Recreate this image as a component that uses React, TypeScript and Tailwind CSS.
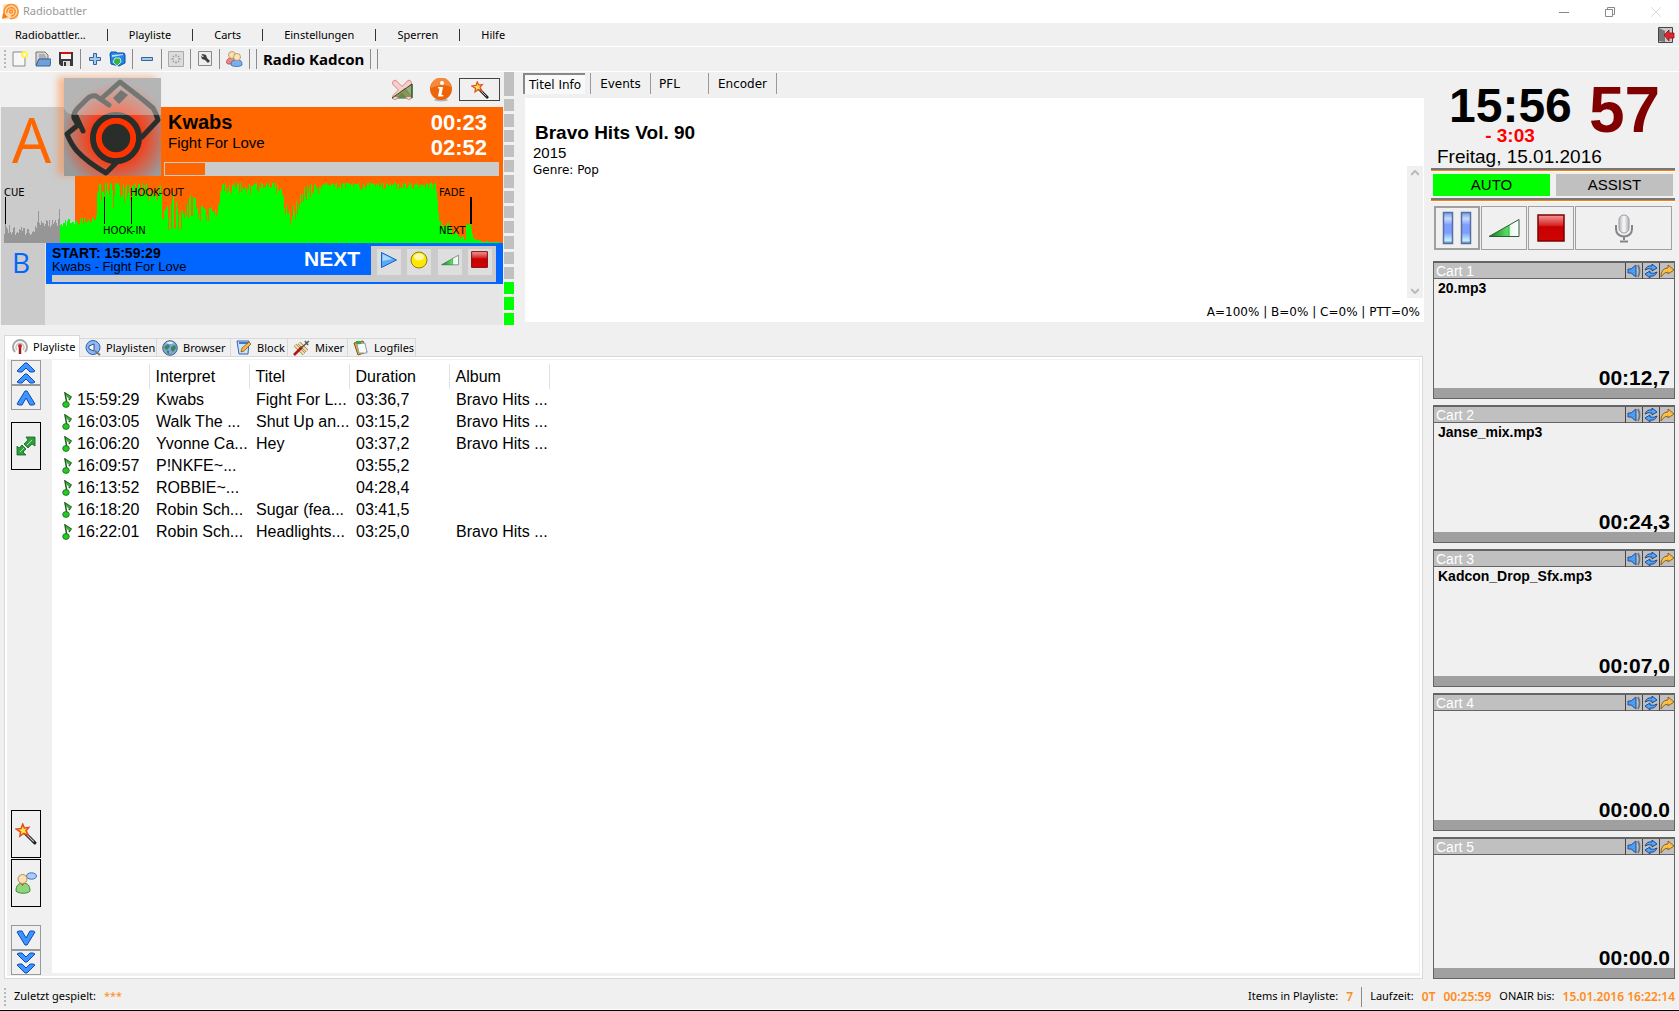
import React from 'react';

type IconProps = { className?: string };

const MENU = ['Radiobattler...', 'Playliste', 'Carts', 'Einstellungen', 'Sperren', 'Hilfe'];

const TRACKS = [
  { time: '15:59:29', artist: 'Kwabs', title: 'Fight For L...', duration: '03:36,7', album: 'Bravo Hits ...' },
  { time: '16:03:05', artist: 'Walk The ...', title: 'Shut Up an...', duration: '03:15,2', album: 'Bravo Hits ...' },
  { time: '16:06:20', artist: 'Yvonne Ca...', title: 'Hey', duration: '03:37,2', album: 'Bravo Hits ...' },
  { time: '16:09:57', artist: 'P!NKFE~...', title: '', duration: '03:55,2', album: '' },
  { time: '16:13:52', artist: 'ROBBIE~...', title: '', duration: '04:28,4', album: '' },
  { time: '16:18:20', artist: 'Robin Sch...', title: 'Sugar (fea...', duration: '03:41,5', album: '' },
  { time: '16:22:01', artist: 'Robin Sch...', title: 'Headlights...', duration: '03:25,0', album: 'Bravo Hits ...' },
];

const CARTS = [
  { name: 'Cart 1', file: '20.mp3', time: '00:12,7' },
  { name: 'Cart 2', file: 'Janse_mix.mp3', time: '00:24,3' },
  { name: 'Cart 3', file: 'Kadcon_Drop_Sfx.mp3', time: '00:07,0' },
  { name: 'Cart 4', file: '', time: '00:00.0' },
  { name: 'Cart 5', file: '', time: '00:00.0' },
];

// x, lowest and highest level of the waveform from that point on
const ENVELOPE: [number, number, number][] = [
  [3, 8, 19], [33, 8, 16], [36, 16, 24], [57, 16, 24], [60, 16, 24], [90, 18, 27], [95, 22, 28],
  [96, 36, 60], [110, 34, 60], [135, 44, 60], [160, 34, 58], [161, 8, 44], [180, 12, 56], [190, 22, 48],
  [207, 20, 36], [216, 24, 36], [220, 46, 60], [235, 50, 60], [278, 48, 60], [284, 24, 42], [290, 16, 32],
  [296, 22, 50], [302, 40, 56], [314, 48, 60], [330, 52, 60], [434, 54, 60], [436, 40, 44], [438, 14, 24],
  [448, 10, 22], [458, 3, 8], [464, 2, 6], [465, 18, 20], [469, 18, 20], [472, 4, 5], [480, 1, 2], [499, 1, 1],
];

const buildWave = (from: number, to: number) => {
  let path = '';
  for (let x = from; x < to; x++) {
    let i = 0;
    while (i < ENVELOPE.length - 2 && ENVELOPE[i + 1][0] <= x) i++;
    const [x0, lo0, hi0] = ENVELOPE[i];
    const [x1, lo1, hi1] = ENVELOPE[i + 1];
    const t = Math.min(1, (x - x0) / (x1 - x0));
    const lo = lo0 + (lo1 - lo0) * t;
    const hi = hi0 + (hi1 - hi0) * t;
    const n = Math.abs(Math.sin(x * 127.1 + 11.7) * 43758.5453) % 1;
    const level = Math.round(hi - (hi - lo) * (lo > 30 ? n * n : n));
    path += `M${x} 67V${67 - level}h1V67z`;
  }
  return path;
};

const WAVE_PLAYED = buildWave(3, 59) + 'M37 67V35h1V67zM58 67V33h1V67z';
const WAVE_REST = buildWave(59, 499);

const AppLogo = () => (
  <svg width="17" height="17" viewBox="0 0 17 17">
    <rect x="1" y="1" width="15" height="15" rx="3" fill="#ffd9ae" />
    <g fill="none" stroke="#f7922e" strokeWidth="1.6">
      <path d="M3 12A7 7 0 1 1 8 15.5" />
      <path d="M5 10a4.2 4.2 0 1 1 4 3" />
      <circle cx="9" cy="8.500" r="1.500" />
    </g>
    <path d="M0 16l1-6 5 4z" fill="#f57c12" />
  </svg>
);

const NewIcon = () => (
  <svg width="16" height="16" viewBox="0 0 16 16">
    <path d="M1 1h12v14H1z" fill="#f7f7f7" stroke="#8a8a8a" />
    <circle cx="12.500" cy="3.500" r="3.500" fill="#fff34a" />
    <circle cx="12.500" cy="3.500" r="1.300" fill="#fff" />
  </svg>
);

const OpenIcon = () => (
  <svg width="16" height="16" viewBox="0 0 16 16">
    <path d="M1 14V1h9l3 3v4H4z" fill="#d6d6d6" stroke="#777" />
    <path d="M4 4h6M4 6h7" stroke="#888" />
    <path d="M4 8h12l-1 7H1z" fill="#6f9fd6" stroke="#3465a4" />
  </svg>
);

const SaveIcon = () => (
  <svg width="16" height="16" viewBox="0 0 16 16">
    <path d="M1 1h14v14H3l-2-2z" fill="#3a3a3a" />
    <path d="M3 1h10v7H3z" fill="#f4f4f4" />
    <path d="M3 1h10v2H3z" fill="#e00b0b" />
    <path d="M5 10h7v5H5z" fill="#ddd" />
    <path d="M6 11h2v4H6z" fill="#333" />
  </svg>
);

const PlusIcon = () => (
  <svg width="16" height="16" viewBox="0 0 16 16">
    <path d="M6.500 2.500h3v4h4v3h-4v4h-3v-4h-4v-3h4z" fill="#a8c8ea" stroke="#2f66a8" />
  </svg>
);

const MinusIcon = () => (
  <svg width="16" height="16" viewBox="0 0 16 16">
    <path d="M2.500 6.500h11v3h-11z" fill="#a8c8ea" stroke="#2f66a8" />
  </svg>
);

const ImportIcon = () => (
  <svg width="17" height="16" viewBox="0 0 17 16">
    <path d="M1 3l1-2h5l1 1h7l1 2v8l-6 3-8-2z" fill="#2584e8" stroke="#0d4ea6" />
    <path d="M3 4l11-1v1L3 6z" fill="#bfe0ff" />
    <path d="M6 7h5l1 4-4 4-4-4z" fill="#35b544" stroke="#dfffe0" strokeWidth="0.8" />
  </svg>
);

const GreyGearIcon = () => (
  <svg width="16" height="16" viewBox="0 0 16 16">
    <path d="M.5.5h15v15H.5z" fill="#dcdcdc" stroke="#aaa" />
    <path d="M8 3.500v2M8 10.500v2M3.500 8h2M10.500 8h2M5 5l1 1M10 10l1 1M11 5l-1 1M6 10l-1 1" stroke="#999" strokeWidth="1.4" />
  </svg>
);

const WrenchIcon = () => (
  <svg width="16" height="16" viewBox="0 0 16 16">
    <path d="M1.500.5h13v14h-13z" fill="#eee" stroke="#888" />
    <path d="M4 4l2-1 3 1 1 3 3 3-2 2-3-3-3-1-1-3 2 1 1-1z" fill="#3c3c3c" />
  </svg>
);

const UsersIcon = () => (
  <svg width="17" height="16" viewBox="0 0 17 16">
    <path d="M.5 12c0-4 2-5 5-5s5 1 5 4v2H2z" fill="#e88a80" stroke="#b74a42" strokeWidth="0.8" />
    <circle cx="6" cy="4" r="3.500" fill="#f6e0bb" stroke="#b98b4a" strokeWidth="0.8" />
    <path d="M5 14c0-4 2-5 6-5s5 1 5 5c-2 2-9 2-11 0z" fill="#79aef0" stroke="#2e66b5" strokeWidth="0.8" />
    <circle cx="11" cy="6" r="3.500" fill="#fae4bb" stroke="#b98b4a" strokeWidth="0.8" />
  </svg>
);

const ExitIcon = () => (
  <svg width="17" height="16" viewBox="0 0 17 16">
    <path d="M.5.500h14v15H.500z" fill="#c9c9c9" stroke="#444" />
    <path d="M1 1l6 3v11l-6-1z" fill="#777" />
    <path d="M6 8l5-5v3h5v5h-5v3z" fill="#e0262d" stroke="#8d1015" strokeWidth="0.8" />
  </svg>
);

const WandIcon = ({ className = 'w-[18px] h-[18px]' }: IconProps) => (
  <svg className={className} viewBox="0 0 20 20">
    <path d="M9 9l9 9" stroke="#222" strokeWidth="3" strokeLinecap="round" />
    <path d="M11 11l6 6" stroke="#ccc" strokeWidth="1" />
    <path d="M7 1l1.500 3.500 4-.5-2.500 3 2 4-4-1.500L4.500 12l.5-4L1 5.500 5.500 5z" fill="#ffe34e" stroke="#e0511d" strokeWidth="1.4" />
  </svg>
);

const Ramp = ({ className = 'w-4 h-3' }: IconProps) => (
  <svg className={className} viewBox="0 0 32 19">
    <defs>
      <linearGradient id="ramp" x1="0" x2="1">
        <stop offset="0" stopColor="#0c7a1d" />
        <stop offset="0.600" stopColor="#58dd62" />
        <stop offset="0.680" stopColor="#37c34a" />
        <stop offset="0.690" stopColor="#e6f7ea" />
        <stop offset="1" stopColor="#fff" />
      </linearGradient>
    </defs>
    <path d="M1 18L31 1v17z" fill="url(#ramp)" stroke="#2c5c3c" strokeWidth="1" />
  </svg>
);

const StopIcon = ({ className = 'w-4 h-4' }: IconProps) => (
  <svg className={className} viewBox="0 0 28 28">
    <defs>
      <linearGradient id="stop" x1="0" y1="0" x2="0" y2="1">
        <stop offset="0" stopColor="#f49a9a" />
        <stop offset="0.400" stopColor="#d62424" />
        <stop offset="0.450" stopColor="#c90000" />
        <stop offset="1" stopColor="#cf0505" />
      </linearGradient>
    </defs>
    <path d="M1 1h26v26H1z" fill="url(#stop)" stroke="#7d0000" strokeWidth="1.5" />
  </svg>
);

const FadeOffIcon = () => (
  <svg width="22" height="22" viewBox="0 0 22 22">
    <path d="M1 19L21 5v14z" fill="#8fae7a" stroke="#385f2c" />
    <path d="M4 4l14 14M18 4L4 18" stroke="#d98080" strokeWidth="6" strokeLinecap="round" opacity="0.800" />
    <path d="M4 4l14 14M18 4L4 18" stroke="#f8cdca" strokeWidth="4" strokeLinecap="round" />
    <path d="M4 17l10-8 7 9H3z" fill="#4d7a22" opacity="0.650" />
    <path d="M1 19L21 5v14" fill="none" stroke="#2c5020" />
  </svg>
);

const InfoIcon = () => (
  <svg width="24" height="24" viewBox="0 0 24 24">
    <ellipse cx="12" cy="22" rx="7" ry="1.500" fill="#b5b5b5" />
    <circle cx="12" cy="11" r="11" fill="#ee6406" />
    <path d="M2 10a10 10 0 0 1 20-1c-6-3-14-2-20 1z" fill="#f58a3c" />
    <circle cx="13" cy="5" r="2" fill="#fff" />
    <path d="M9 9h5l-1.500 8h2l-.5 1.500H9L10.500 10.500H9z" fill="#fff" />
  </svg>
);

const CameraArt = () => (
  <svg width="97" height="98" viewBox="0 0 97 98" className="block">
    <defs>
      <radialGradient id="glow" cx="0.540" cy="0.600" r="0.560">
        <stop offset="0" stopColor="#ff3300" />
        <stop offset="0.450" stopColor="#fb3a12" />
        <stop offset="1" stopColor="#9a9a9a" />
      </radialGradient>
    </defs>
    <path d="M0 0h97v98H0z" fill="url(#glow)" />
    <g fill="none" stroke="#2a2e2a" strokeWidth="5" strokeLinecap="round" strokeLinejoin="round">
      <path d="M37 21L56 4l22 17 11 9q3 5 5 12L78 59" />
      <path d="M45 27L32 18q-5-1-9 3L13 31q-4 5-3 9l4 7L3 56q4 10 10 17 10 11 29 22l13-13" />
      <path d="M12 38l7 15" />
    </g>
    <path d="M57 12l7 5-9 9-6-6z" fill="#2a2e2a" />
    <circle cx="52" cy="60" r="23" fill="none" stroke="#2a2e2a" strokeWidth="6" />
    <circle cx="52" cy="60" r="17" fill="#2a2e2a" stroke="#ff3300" strokeWidth="5.500" />
    <path d="M0 0h97v37H10Q2 36 0 30z" fill="#dcdcdc" opacity="0.420" />
  </svg>
);

const PlayIcon = () => (
  <svg width="18" height="18" viewBox="0 0 18 18">
    <path d="M1.500 1.500l15 7.500-15 7.500z" fill="#55acf6" stroke="#1c5fc2" />
    <path d="M2.500 3l10 5-10 2z" fill="#a8d7ff" />
  </svg>
);

const LampIcon = () => (
  <svg width="18" height="18" viewBox="0 0 18 18">
    <circle cx="9" cy="9" r="8" fill="#ffe800" stroke="#8f7c1c" />
    <ellipse cx="9" cy="6" rx="5" ry="3.500" fill="#fff9a5" />
  </svg>
);

const PauseIcon = () => (
  <svg width="30" height="34" viewBox="0 0 30 34">
    <defs>
      <linearGradient id="pause" x1="0" y1="0" x2="0" y2="1">
        <stop offset="0" stopColor="#7597e8" />
        <stop offset="0.200" stopColor="#c8dcff" />
        <stop offset="0.400" stopColor="#7f9cff" />
        <stop offset="0.650" stopColor="#7f9cff" />
        <stop offset="0.900" stopColor="#c5f1ff" />
        <stop offset="1" stopColor="#5b83c9" />
      </linearGradient>
    </defs>
    <path d="M1.500 1.500h9v31h-9zM19.500 1.500h9v31h-9z" fill="url(#pause)" stroke="#55709c" strokeWidth="1.500" />
  </svg>
);

const MicIcon = () => (
  <svg width="18" height="29" viewBox="0 0 18 29">
    <defs>
      <linearGradient id="mic" x1="0" x2="1">
        <stop offset="0" stopColor="#b9b9b9" />
        <stop offset="0.500" stopColor="#fafafa" />
        <stop offset="1" stopColor="#b0b0b0" />
      </linearGradient>
    </defs>
    <path d="M1 11v4c0 10 16 10 16 0v-4M9 22v4M5 27.500h8" fill="none" stroke="#858585" strokeWidth="2" />
    <rect x="4" y="1" width="10" height="18" rx="5" fill="url(#mic)" stroke="#9a9aa8" />
  </svg>
);

const NoteIcon = () => (
  <svg width="11" height="16" viewBox="0 0 11 16">
    <path d="M5 12L3 1l6 4-2 3" fill="none" stroke="#245c24" strokeWidth="1.500" />
    <path d="M4 2l5 3-2 2-3-3z" fill="#35b535" />
    <ellipse cx="4" cy="12.500" rx="3.300" ry="2.900" fill="#22cc22" stroke="#146614" strokeWidth="0.800" />
  </svg>
);

// one or two stacked chevrons, "down" flips them
const Chevrons = ({ count, down = false }: { count: 1 | 2; down?: boolean }) => (
  <svg width="20" height={count === 2 ? 22 : 16} viewBox={count === 2 ? '0 0 20 22' : '0 0 20 16'} className={down ? 'rotate-180' : ''}>
    {count === 2 ? (
      <path d="M1 9l8-8h2l8 8-2 1h-3l-4-4-4 4H3zM1 20l8-8h2l8 8-2 1h-3l-4-4-4 4H3z" fill="#3f95ff" stroke="#0a4ab8" />
    ) : (
      <path d="M1 14L9 1h2l8 13-2 1h-3l-4-7-4 7H3z" fill="#3f95ff" stroke="#0a4ab8" />
    )}
  </svg>
);

const ExpandIcon = () => (
  <svg width="20" height="20" viewBox="0 0 20 20" fill="#2f9e3c" stroke="#14602a" strokeWidth="0.800">
    <path d="M10 1h9v9l-3-2-4 4-4-4 4-4z" />
    <path d="M10 19H1v-9l2 2 3-3 4 4-3 3z" />
    <path d="M11 9l5-5M4 16l4-4" stroke="#c6f0c8" />
  </svg>
);

const ChatUserIcon = () => (
  <svg width="22" height="22" viewBox="0 0 22 22">
    <ellipse cx="16.500" cy="4" rx="5" ry="3.200" fill="#a9cdfb" stroke="#3c6fb9" />
    <path d="M1 19c0-5 2-8 7-8s7 3 7 8c-2 3-12 3-14 0z" fill="#8ed67c" stroke="#3f8a34" />
    <circle cx="7.500" cy="7" r="4.500" fill="#fae0b4" stroke="#b98b4a" />
    <path d="M6 12h3l-1.500 2z" fill="#e03a1a" />
  </svg>
);

const AntennaIcon = () => (
  <svg width="16" height="16" viewBox="0 0 16 16" fill="none">
    <path d="M3 13a7 7 0 1 1 10 0" stroke="#a5a5a5" strokeWidth="2" />
    <path d="M5 11a4 4 0 1 1 6 0" stroke="#c2c2c2" strokeWidth="1.500" />
    <path d="M8 8v7" stroke="#a01818" strokeWidth="2.500" />
    <circle cx="8" cy="7" r="2" fill="#e02020" />
  </svg>
);

const ListsIcon = () => (
  <svg width="16" height="16" viewBox="0 0 16 16">
    <circle cx="8" cy="7.500" r="7" fill="#8db8f2" stroke="#2e62b8" />
    <path d="M4 6l5-2v7L4 9z" fill="#fff" stroke="#2a5199" />
    <path d="M10 11l5 4" stroke="#777" strokeWidth="2" />
  </svg>
);

const GlobeIcon = () => (
  <svg width="16" height="16" viewBox="0 0 16 16">
    <circle cx="8" cy="8" r="7.300" fill="#78a9d8" stroke="#4a5f77" />
    <path d="M2 7l4-3 2 2-2 3-2 1zM9 7l4-2 1 3-3 4-2-2zM5 10l2 1v3l-2-1z" fill="#41825b" />
    <path d="M4 3q4-3 8 0-4 2-8 0z" fill="#e5f1fb" />
  </svg>
);

const BlockIcon = () => (
  <svg width="16" height="16" viewBox="0 0 16 16">
    <path d="M1 1h12l-1 13H3z" fill="#cfe2fb" stroke="#2e62b8" />
    <path d="M3 2h9v2H3z" fill="#3d77cc" />
    <path d="M5 12l1-4 7-6 2 2-7 7z" fill="#f7b93e" stroke="#8c5a14" strokeWidth="0.800" />
  </svg>
);

const MixerIcon = () => (
  <svg width="17" height="16" viewBox="0 0 17 16" fill="none">
    <path d="M2 5l9 9M6 3l8 8" stroke="#a3894a" strokeWidth="3.500" />
    <path d="M2 5l9 9M6 3l8 8" stroke="#f3e2ae" strokeWidth="1.800" />
    <path d="M1 15l8-8" stroke="#b31414" strokeWidth="2.500" />
    <path d="M8 8l8-7M12 1l3 4" stroke="#555" strokeWidth="1.500" />
  </svg>
);

const LogIcon = () => (
  <svg width="16" height="16" viewBox="0 0 16 16">
    <path d="M1 3l9-2 4 11-9 3z" fill="#dfa93d" stroke="#7b5a1c" />
    <path d="M4 4l8-1 2 10H6z" fill="#f6fbff" stroke="#91a0ab" />
    <path d="M3 1h5v3H3z" fill="#3ca644" />
  </svg>
);

const SpeakerIcon = () => (
  <svg width="14" height="14" viewBox="0 0 14 14">
    <path d="M1 5h3l5-4v12l-5-4H1z" fill="#4f9cf2" stroke="#1d549f" />
    <path d="M11 1q3 6 0 12" fill="none" stroke="#6f7580" strokeWidth="1.800" />
  </svg>
);

const LoopIcon = () => (
  <svg width="14" height="14" viewBox="0 0 14 14">
    <path d="M1 6q2-5 7-4V0l5 4-5 3V5Q4 4 1 6zM13 8q-2 5-7 4v2l-5-4 5-3v2q4 1 7-1z" fill="#4fa5ff" stroke="#153e80" strokeWidth="0.900" />
  </svg>
);

const ForwardIcon = () => (
  <svg width="14" height="14" viewBox="0 0 14 14">
    <path d="M1 13Q1 4 8 4V1l6 5-6 4V8q-4 0-7 5z" fill="#fcbf4a" stroke="#8a5a14" strokeWidth="0.900" />
  </svg>
);

const Separator = () => <span className="w-px h-5 bg-[#8c8c8c]" />;

const Grip = () => <span className="w-0.5 h-[18px] border-l-2 border-dotted border-[#b8b8b8]" />;

const TopBars = () => (
  <header className="font-['Noto_Sans',sans-serif]">
    <div className="h-[23px] bg-white flex items-center pl-0.5 pr-[18px] gap-1 text-[11px] text-[#999]">
      <AppLogo />
      <span className="flex-1">Radiobattler</span>
      <div className="flex items-center gap-9">
        <button aria-label="Minimieren">
          <svg width="10" height="10"><path d="M0 5.500h10" stroke="#888" /></svg>
        </button>
        <button aria-label="Wiederherstellen">
          <svg width="10" height="10" fill="none" stroke="#888"><path d="M.5 2.500h7v7h-7zM2.500 2.500v-2h7v7h-2" /></svg>
        </button>
        <button aria-label="Schließen">
          <svg width="10" height="10"><path d="M0 0l10 10M10 0L0 10" stroke="#ddd" /></svg>
        </button>
      </div>
    </div>
    <nav className="h-6 border-b border-white flex items-center pt-px pl-[15px] pr-1 gap-[21px] text-[11px] text-black">
      {MENU.map((item, i) => (
        <React.Fragment key={item}>
          {i > 0 && <span className="w-px h-3 bg-[#333]" />}
          <button>{item}</button>
        </React.Fragment>
      ))}
      <button aria-label="Beenden" className="ml-auto"><ExitIcon /></button>
    </nav>
    <div className="h-[25px] border-b border-white flex items-center pl-1 gap-1.5">
      <Grip />
      <div className="flex gap-[7px]">
        <button aria-label="Neu"><NewIcon /></button>
        <button aria-label="Öffnen"><OpenIcon /></button>
        <button aria-label="Speichern"><SaveIcon /></button>
      </div>
      <Separator />
      <button aria-label="Hinzufügen"><PlusIcon /></button>
      <button aria-label="Importieren"><ImportIcon /></button>
      <Separator />
      <button aria-label="Entfernen"><MinusIcon /></button>
      <Separator />
      <button aria-label="Optionen"><GreyGearIcon /></button>
      <Separator />
      <button aria-label="Werkzeuge"><WrenchIcon /></button>
      <Separator />
      <button aria-label="Benutzer"><UsersIcon /></button>
      <Separator />
      <Separator />
      <span className="text-[15px] leading-5 font-bold text-black">Radio Kadcon</span>
      <Separator />
      <Separator />
    </div>
  </header>
);

const Mark = ({ className, children }: { className: string; children: React.ReactNode }) => (
  <span className={`absolute font-['DejaVu_Sans',sans-serif] text-[10px] leading-[10px] text-black ${className}`}>{children}</span>
);

const Decks = () => (
  <section className="w-[502px] ml-px shrink-0 flex flex-col font-['Liberation_Sans',sans-serif]">
    <div className="h-[35px] flex items-center justify-end gap-1.5 pr-[3px]">
      <button aria-label="Fade aus" className="mr-2.5"><FadeOffIcon /></button>
      <button aria-label="Info"><InfoIcon /></button>
      <button aria-label="Assistent" className="w-[41px] h-[23px] border border-[#444] flex items-center justify-center"><WandIcon /></button>
    </div>

    <div className="relative bg-[#cbcbcb]">
      <div className="absolute left-[63px] -top-[29px] shadow-[-6px_-1px_7px_0px_rgba(255,130,50,0.5)]"><CameraArt /></div>
      <div className="flex h-[69px]">
        <span className="w-[74px] pl-[11px] font-['Open_Sans',sans-serif] text-[62px] leading-[64px] text-[#ff6600]">A</span>
        <div className="flex-1 bg-[#ff6600] flex flex-col pl-[89px]">
          <div className="flex-1 flex justify-between pl-1 pr-4">
            <div className="text-black pt-[3px]">
              <div className="text-[20px] leading-6 font-bold">Kwabs</div>
              <div className="text-[15px] leading-[18px]">Fight For Love</div>
            </div>
            <div className="text-[22px] leading-[25px] font-bold text-white pt-[3px] text-right">
              <div>00:23</div>
              <div>02:52</div>
            </div>
          </div>
          <div className="h-3.5 mr-1 bg-[#cbcbcb] border border-[#cbcbcb]">
            <div className="w-10 h-full bg-[#ff6600]" />
          </div>
        </div>
      </div>
      <div className="relative h-[67px]">
        <svg className="block w-full h-full" viewBox="0 0 502 67" shapeRendering="crispEdges">
          <path d="M74 0h428v67H74z" fill="#ff6600" />
          <path d={WAVE_PLAYED} fill="#969696" />
          <path d={WAVE_REST} fill="#00ff00" />
          <path d="M4.500 21v27M103.500 21v27M130.500 21v27" stroke="#000" />
          <path d="M470 21v27" stroke="#000" strokeWidth="2" />
        </svg>
        <Mark className="left-[3px] top-3">CUE</Mark>
        <Mark className="left-[129px] top-3">HOOK-OUT</Mark>
        <Mark className="left-[102px] top-[50px]">HOOK-IN</Mark>
        <Mark className="left-[438px] top-3">FADE</Mark>
        <Mark className="left-[438px] top-[50px]">NEXT</Mark>
      </div>
    </div>

    <div className="flex flex-1 bg-[#e6e6e6]">
      <span className="w-11 bg-[#cbcbcb] pl-[11px] font-['Open_Sans',sans-serif] text-[28px] leading-[38px] text-[#0066ff]">B</span>
      <div className="flex-1">
        <div className="h-[41px] ml-px bg-[#0066ff] flex flex-col pl-1.5 pr-[7px]">
          <div className="flex h-8">
            <div className="flex-1 text-black pt-[3px]">
              <div className="text-[14px] leading-[14px] font-bold">START: 15:59:29</div>
              <div className="text-[13px] leading-[14px]">Kwabs - Fight For Love</div>
            </div>
            <span className="text-[21px] leading-[31px] font-bold text-white pr-[11px]">NEXT</span>
            <div className="w-[125px] mt-[3px] bg-[#cbcbcb] flex items-start justify-between pl-1.5 pr-1 pt-[3px]">
              <button aria-label="Start" className="w-6 h-[26px] bg-[#dedede] flex justify-center pt-0.5"><PlayIcon /></button>
              <button aria-label="PFL" className="w-6 h-[26px] bg-[#dedede] flex justify-center pt-0.5"><LampIcon /></button>
              <button aria-label="Fade" className="w-6 h-[26px] bg-[#dedede] flex justify-center pt-1"><Ramp className="w-[18px] h-3.5" /></button>
              <button aria-label="Stop" className="w-6 h-[26px] bg-[#dedede] flex justify-center pt-0.5"><StopIcon className="w-[17px] h-[17px]" /></button>
            </div>
          </div>
          <div className="h-[7px] bg-[#cbcbcb]" />
        </div>
      </div>
    </div>
  </section>
);

const LevelMeter = () => (
  <div className="w-2.5 ml-px shrink-0 flex flex-col gap-[3px]">
    <span className="h-6 bg-[#c0c0c0]" />
    {Array.from({ length: 15 }, (_, i) => (
      <span key={i} className={`flex-1 ${i >= 12 ? 'bg-[#00ff00]' : 'bg-[#c0c0c0]'}`} />
    ))}
  </div>
);

const TitleInfo = () => (
  <section className="flex-1 min-w-0 ml-[9px] mb-[3px] flex flex-col font-['DejaVu_Sans',sans-serif] text-[12px] text-black">
    <div className="h-[26px] flex items-start pt-px">
      <button className="h-[21px] w-[62px] border-t-2 border-l-2 border-[#888] bg-[#f9f9f9] whitespace-nowrap">Titel Info</button>
      <button className="h-[21px] w-[60px] ml-[5px] border-l border-[#999]">Events</button>
      <button className="h-[21px] w-[58px] border-l border-[#999] pr-5">PFL</button>
      <button className="h-[21px] w-[69px] border-x border-[#999]">Encoder</button>
    </div>
    <div className="flex-1 ml-0.5 bg-white flex flex-col pl-2 pr-px">
      <div className="flex-1 flex justify-between">
        <div className="pt-6">
          <h1 className="pl-0.5 font-['Liberation_Sans',sans-serif] text-[19px] leading-[22px] font-bold">Bravo Hits Vol. 90</h1>
          <p className="font-['Liberation_Sans',sans-serif] text-[15px] leading-[18px]">2015</p>
          <p className="leading-4">Genre: Pop</p>
        </div>
        <div className="w-4 mt-[68px] bg-[#f0f0f0] flex flex-col items-center justify-between py-1">
          <svg width="8" height="6" fill="none" stroke="#bbb" strokeWidth="2"><path d="M0 5l4-4 4 4" /></svg>
          <svg width="8" height="6" fill="none" stroke="#bbb" strokeWidth="2"><path d="M0 1l4 4 4-4" /></svg>
        </div>
      </div>
      <div className="h-6 pr-[3px] text-right leading-[28px]">A=100% | B=0% | C=0% | PTT=0%</div>
    </div>
  </section>
);

const TABS = [
  { label: 'Playlisten', icon: <ListsIcon />, width: 'w-[77px]' },
  { label: 'Browser', icon: <GlobeIcon />, width: 'w-[74px]' },
  { label: 'Block', icon: <BlockIcon />, width: 'w-[57px]' },
  { label: 'Mixer', icon: <MixerIcon />, width: 'w-[60px]' },
  { label: 'Logfiles', icon: <LogIcon />, width: 'w-[68px]' },
];

const SideButton = ({ label, className, children }: { label: string; className: string; children: React.ReactNode }) => (
  <button aria-label={label} className={`w-[30px] flex items-center justify-center border ${className}`}>{children}</button>
);

const Playlist = () => (
  <section className="flex-1 flex flex-col pl-1 pr-2 pt-2.5 text-black">
    <div className="flex items-end font-['Noto_Sans',sans-serif] text-[11px] leading-4">
      <button className="relative w-[76px] h-[22px] -mb-px border border-b-0 border-[#d9d9d9] bg-white flex items-center gap-[5px] pl-[7px] whitespace-nowrap">
        <AntennaIcon />Playliste
      </button>
      {TABS.map((tab) => (
        <button key={tab.label} className={`h-[18px] border border-l-0 border-b-0 border-[#d9d9d9] flex items-center gap-[5px] pl-[5px] whitespace-nowrap ${tab.width}`}>
          {tab.icon}{tab.label}
        </button>
      ))}
    </div>
    <div className="flex-1 border border-[#d9d9d9] bg-white p-0.5 flex">
      <div className="flex-1 flex bg-[#f0f0f0] pt-px pb-px pr-px">
        <div className="w-[45px] flex flex-col pl-1">
          <SideButton label="Ganz nach oben" className="h-[25px] border-[#999]"><Chevrons count={2} /></SideButton>
          <SideButton label="Nach oben" className="h-[25px] border-[#999]"><Chevrons count={1} /></SideButton>
          <SideButton label="Erweitern" className="h-12 mt-3 border-black"><ExpandIcon /></SideButton>
          <SideButton label="Assistent" className="h-12 mt-auto border-black"><WandIcon className="w-[22px] h-[22px]" /></SideButton>
          <SideButton label="Moderation" className="h-12 mt-px border-black"><ChatUserIcon /></SideButton>
          <SideButton label="Nach unten" className="h-[25px] mt-[18px] border-[#999]"><Chevrons count={1} down /></SideButton>
          <SideButton label="Ganz nach unten" className="h-[25px] border-[#999]"><Chevrons count={2} down /></SideButton>
        </div>
        <div className="flex-1 bg-white mb-0.5 pt-1">
          <table className="table-fixed w-[497px] font-['Liberation_Sans',sans-serif] text-[16px] leading-[22px]">
            <thead>
              <tr className="h-[25px] text-left">
                <th className="w-[97px] border-r border-[#e2e2e2]" />
                {['Interpret', 'Titel', 'Duration', 'Album'].map((head) => (
                  <th key={head} className="w-[100px] pl-1.5 font-normal border-r border-[#e2e2e2]">{head}</th>
                ))}
              </tr>
            </thead>
            <tbody>
              {TRACKS.map((track) => (
                <tr key={track.time} className="h-[22px] whitespace-nowrap">
                  <td>
                    <div className="flex items-center gap-1 pl-2.5"><NoteIcon /><span>{track.time}</span></div>
                  </td>
                  <td className="pl-[7px]">{track.artist}</td>
                  <td className="pl-[7px]">{track.title}</td>
                  <td className="pl-[7px]">{track.duration}</td>
                  <td className="pl-[7px]">{track.album}</td>
                </tr>
              ))}
            </tbody>
          </table>
        </div>
      </div>
    </div>
  </section>
);

const Rule = () => <div className="h-1 border-t-2 border-[#777] bg-[#ff8000] border-b border-b-white" />;

const Studio = () => (
  <aside className="w-[248px] shrink-0 pr-1 flex flex-col font-['Liberation_Sans',sans-serif] text-black">
    <div className="h-24 pl-1.5 flex flex-col">
      <div className="flex h-[74px] font-bold">
        <div className="w-[134px] pl-3 pt-[13px]">
          <div className="text-[48px] leading-[42px]">15:56</div>
          <div className="text-[19px] leading-[18px] text-center text-[#ff0000]">- 3:03</div>
        </div>
        <div className="pl-[18px] pt-1.5 text-[64px] leading-[64px] text-[#800000]">57</div>
      </div>
      <div className="text-[19px] leading-[22px]">Freitag, 15.01.2016</div>
    </div>
    <Rule />
    <div className="flex gap-1.5 pl-0.5 pr-0.5 py-0.5 text-[15px] leading-[22px]">
      <button className="flex-1 bg-[#00ff00]">AUTO</button>
      <button className="flex-1 bg-[#c0c0c0]">ASSIST</button>
    </div>
    <Rule />
    <div className="flex gap-px h-11 ml-[3px] mr-[3px] mt-1">
      <button aria-label="Pause" className="w-[46px] border-2 border-[#a0a0a0] flex items-center justify-center"><PauseIcon /></button>
      <button aria-label="Fade" className="w-[46px] border border-[#a0a0a0] flex items-center justify-center"><Ramp className="w-8 h-5" /></button>
      <button aria-label="Stop" className="w-[46px] border border-[#a0a0a0] flex items-center justify-center"><StopIcon className="w-7 h-7" /></button>
      <button aria-label="Mikrofon" className="flex-1 border border-[#a0a0a0] flex items-center justify-center"><MicIcon /></button>
    </div>
    <div className="flex-1 flex flex-col gap-1.5 mt-[11px] pl-0.5">
      {CARTS.map((cart) => (
        <article key={cart.name} className="h-[138px] last:h-auto last:flex-1 border border-t-2 border-[#646464] flex flex-col">
          <header className="h-4 bg-[#c0c0c0] border-b border-[#646464] flex items-center pl-0.5 text-[14px] leading-4 text-white">
            <span className="flex-1">{cart.name}</span>
            <button aria-label="Lautstärke" className="h-4 px-px border-l border-[#444]"><SpeakerIcon /></button>
            <button aria-label="Schleife" className="h-4 px-px border-l border-[#444]"><LoopIcon /></button>
            <button aria-label="Weiter" className="h-4 border-l border-[#444]"><ForwardIcon /></button>
          </header>
          <div className="flex-1 pl-1 text-[14px] leading-[18px] font-bold">{cart.file}</div>
          <div className="pr-1 text-right text-[21px] leading-5 font-bold">{cart.time}</div>
          <div className="h-2.5 bg-[#a0a0a0]" />
        </article>
      ))}
    </div>
  </aside>
);

const StatusBar = () => (
  <footer className="font-['Noto_Sans',sans-serif] text-[11px] text-black">
    <div className="h-[30px] flex items-center pl-1 pr-1 pt-[5px] gap-2">
      <Grip />
      <span>Zuletzt gespielt:</span>
      <span className="flex-1 text-[#ff8c1a]">***</span>
      <span>Items in Playliste:</span>
      <b className="text-[12px] font-semibold text-[#ff8c1a]">7</b>
      <Separator />
      <span>Laufzeit:</span>
      <b className="text-[12px] font-semibold text-[#ff8c1a]">0T</b>
      <b className="text-[12px] font-semibold text-[#ff8c1a]">00:25:59</b>
      <span>ONAIR bis:</span>
      <b className="text-[12px] font-semibold text-[#ff8c1a]">15.01.2016 16:22:14</b>
    </div>
    <div className="h-0.5 bg-white border-b border-black" />
  </footer>
);

export default function App() {
  return (
    <div className="min-h-screen flex flex-col bg-[#f0f0f0]">
      <TopBars />
      <main className="flex-1 flex">
        <div className="flex-1 min-w-0 flex flex-col">
          <div className="flex h-[253px] pr-[7px]">
            <Decks />
            <LevelMeter />
            <TitleInfo />
          </div>
          <Playlist />
        </div>
        <Studio />
      </main>
      <StatusBar />
    </div>
  );
}
